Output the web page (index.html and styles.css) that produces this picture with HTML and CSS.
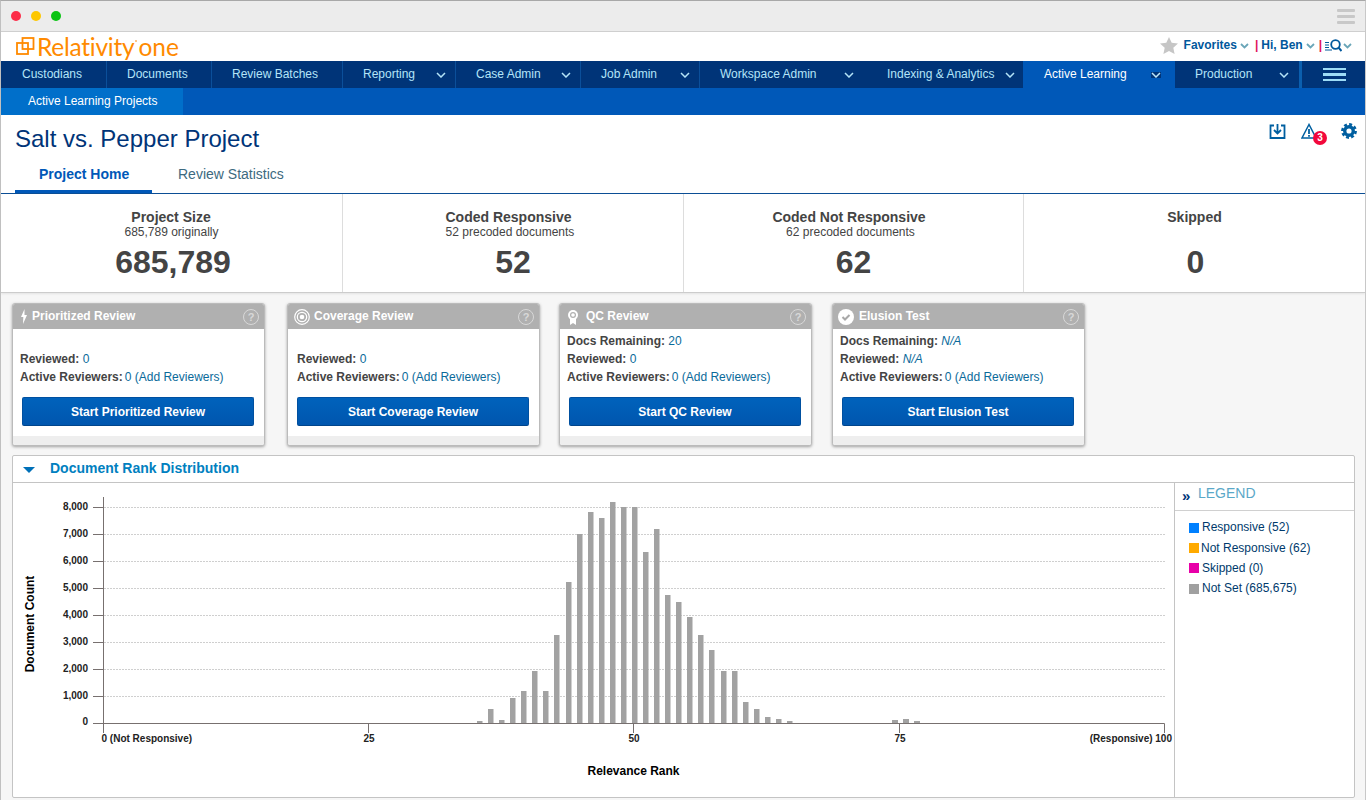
FILE: index.html
```html
<!DOCTYPE html>
<html lang="en">
<head>
  <meta charset="UTF-8">
  <meta name="viewport" content="width=device-width, initial-scale=1.0">
  <title>Salt vs. Pepper Project</title>
  <link rel="stylesheet" href="styles.css">
</head>
<body>
  <div class="window">
    <!-- Browser chrome -->
    <div class="chrome">
      <div class="lights">
        <span class="light light-red"></span>
        <span class="light light-yellow"></span>
        <span class="light light-green"></span>
      </div>
      <div class="chrome-menu"><span></span><span></span><span></span></div>
    </div>

    <!-- Logo row -->
    <div class="brand-row">
      <div class="logo">
        <svg class="logo-mark" width="19" height="18" viewBox="0 0 19 18" fill="none" stroke="#ff8a00" stroke-width="1.800">
          <rect x="1" y="6" width="11" height="11"/>
          <rect x="6.500" y="1" width="11" height="11"/>
        </svg>
        <span class="logo-name">Relativity</span><span class="logo-dot"></span><span class="logo-one">one</span>
      </div>
      <div class="user-menu">
        <svg class="star" width="18" height="17" viewBox="0 0 18 17"><path d="M9 0l2.700 5.800 6.300.7-4.700 4.200 1.300 6.300L9 14l-5.600 3 1.300-6.300L0 6.500l6.300-.7z" fill="#c6c6c6"/></svg>
        <span class="user-link">Favorites</span>
        <svg class="chev-teal" width="9" height="6" viewBox="0 0 9 6"><path d="M1 1l3.500 3.500L8 1" fill="none" stroke="#6aa6b8" stroke-width="1.800"/></svg>
        <span class="pipe">|</span>
        <span class="user-link">Hi, Ben</span>
        <svg class="chev-teal" width="9" height="6" viewBox="0 0 9 6"><path d="M1 1l3.500 3.500L8 1" fill="none" stroke="#6aa6b8" stroke-width="1.800"/></svg>
        <span class="pipe pipe-tight">|</span>
        <svg class="search" width="17" height="13" viewBox="0 0 17 13" fill="none" stroke="#00589c">
          <path d="M0 3.500h4M0 6h4M0 8.500h4M0 11h7" stroke-width="1"/>
          <circle cx="10.500" cy="5.500" r="4.300" stroke-width="1.800"/>
          <path d="M13.500 8.500l3 3.500" stroke-width="2"/>
        </svg>
        <svg class="chev-teal chev-last" width="9" height="6" viewBox="0 0 9 6"><path d="M1 1l3.500 3.500L8 1" fill="none" stroke="#6aa6b8" stroke-width="1.800"/></svg>
      </div>
    </div>

    <!-- Main navigation -->
    <nav class="main-nav">
      <a class="nav-item nav-first">Custodians</a>
      <a class="nav-item">Documents</a>
      <a class="nav-item">Review Batches</a>
      <a class="nav-item">Reporting<svg class="chev" width="10" height="6" viewBox="0 0 10 6"><path d="M1 1l4 4 4-4" fill="none" stroke="currentColor" stroke-width="1.500"/></svg></a>
      <a class="nav-item">Case Admin<svg class="chev" width="10" height="6" viewBox="0 0 10 6"><path d="M1 1l4 4 4-4" fill="none" stroke="currentColor" stroke-width="1.500"/></svg></a>
      <a class="nav-item">Job Admin<svg class="chev" width="10" height="6" viewBox="0 0 10 6"><path d="M1 1l4 4 4-4" fill="none" stroke="currentColor" stroke-width="1.500"/></svg></a>
      <a class="nav-item nav-workspace">Workspace Admin<svg class="chev" width="10" height="6" viewBox="0 0 10 6"><path d="M1 1l4 4 4-4" fill="none" stroke="currentColor" stroke-width="1.500"/></svg></a>
      <a class="nav-item nav-indexing">Indexing &amp; Analytics<svg class="chev" width="10" height="6" viewBox="0 0 10 6"><path d="M1 1l4 4 4-4" fill="none" stroke="currentColor" stroke-width="1.500"/></svg></a>
      <a class="nav-item nav-active">Active Learning<svg class="chev" width="10" height="6" viewBox="0 0 10 6"><path d="M1 1l4 4 4-4" fill="none" stroke="currentColor" stroke-width="1.500"/></svg></a>
      <a class="nav-item nav-last">Production<svg class="chev" width="10" height="6" viewBox="0 0 10 6"><path d="M1 1l4 4 4-4" fill="none" stroke="currentColor" stroke-width="1.500"/></svg></a>
      <div class="nav-burger"><span></span><span></span><span></span></div>
    </nav>

    <div class="sub-nav">
      <a class="sub-item">Active Learning Projects</a>
    </div>

    <!-- Project heading -->
    <header class="page-head">
      <div class="title-row">
        <h1>Salt vs. Pepper Project</h1>
        <div class="head-icons">
          <svg width="17" height="17" viewBox="0 0 17 17" fill="none" stroke="#005fa0" stroke-width="1.800">
            <path d="M5 2.500H1.500v12.500h14V2.500H12"/>
            <path d="M8.500 1v9M5 7l3.500 3.500L12 7"/>
          </svg>
          <div class="alert-icon">
            <svg width="16" height="17" viewBox="0 0 16 17" fill="none" stroke="#005fa0">
              <path d="M8 1.500L1 15h14z" stroke-width="1.500"/>
              <path d="M8 6v5M8 12v1.800" stroke-width="1.800"/>
            </svg>
            <span class="badge">3</span>
          </div>
          <svg class="gear" width="16" height="16" viewBox="0 0 18 18">
            <circle cx="9" cy="9" r="7.400" fill="none" stroke="#005fa0" stroke-width="3" stroke-dasharray="3.300 2.500"/>
            <circle cx="9" cy="9" r="4.800" fill="none" stroke="#005fa0" stroke-width="3.800"/>
          </svg>
        </div>
      </div>
      <div class="tabs">
        <a class="tab tab-active">Project Home</a>
        <a class="tab">Review Statistics</a>
      </div>
    </header>

    <!-- Document counts -->
    <section class="stats">
      <div class="stat stat-first">
        <div class="stat-title">Project Size</div>
        <div class="stat-sub">685,789 originally</div>
        <div class="stat-num">685,789</div>
      </div>
      <div class="stat stat-mid">
        <div class="stat-title">Coded Responsive</div>
        <div class="stat-sub">52 precoded documents</div>
        <div class="stat-num">52</div>
      </div>
      <div class="stat stat-mid">
        <div class="stat-title">Coded Not Responsive</div>
        <div class="stat-sub">62 precoded documents</div>
        <div class="stat-num">62</div>
      </div>
      <div class="stat stat-last">
        <div class="stat-title">Skipped</div>
        <div class="stat-sub">&nbsp;</div>
        <div class="stat-num">0</div>
      </div>
    </section>

    <!-- Review cards -->
    <section class="cards">
      <div class="card">
        <div class="card-head">
          <svg class="card-icon icon-bolt" width="6" height="15" viewBox="0 0 6 15"><path d="M3.500 0L0 8h2.300L2 15l4-9H3.500z" fill="#fff"/></svg>
          <span class="card-title">Prioritized Review</span>
          <span class="help">?</span>
        </div>
        <div class="card-body">
          <div class="line">&nbsp;</div>
          <div class="line"><b>Reviewed:</b> <span class="val">0</span></div>
          <div class="line"><b>Active Reviewers:</b><span class="val count">0</span> <a class="val">(Add Reviewers)</a></div>
          <button class="start">Start Prioritized Review</button>
        </div>
        <div class="card-foot"></div>
      </div>
      <div class="card card-coverage">
        <div class="card-head">
          <svg class="card-icon icon-target" width="16" height="16" viewBox="0 0 16 16" fill="none" stroke="#fff">
            <circle cx="8" cy="8" r="7.300" stroke-width="1.200"/>
            <circle cx="8" cy="8" r="4.700" stroke-width="1.200"/>
            <circle cx="8" cy="8" r="2.300" fill="#fff" stroke="none"/>
          </svg>
          <span class="card-title">Coverage Review</span>
          <span class="help">?</span>
        </div>
        <div class="card-body">
          <div class="line">&nbsp;</div>
          <div class="line"><b>Reviewed:</b> <span class="val">0</span></div>
          <div class="line"><b>Active Reviewers:</b><span class="val count">0</span> <a class="val">(Add Reviewers)</a></div>
          <button class="start">Start Coverage Review</button>
        </div>
        <div class="card-foot"></div>
      </div>
      <div class="card">
        <div class="card-head">
          <svg class="card-icon icon-ribbon" width="12" height="16" viewBox="0 0 12 16">
            <path d="M3 10v6l3-2 3 2v-6z" fill="#fff"/>
            <circle cx="6" cy="6" r="5" fill="#fff"/>
            <circle cx="6" cy="6" r="3" fill="#b0b0b0"/>
            <circle cx="6" cy="6" r="1.800" fill="#fff"/>
          </svg>
          <span class="card-title">QC Review</span>
          <span class="help">?</span>
        </div>
        <div class="card-body">
          <div class="line"><b>Docs Remaining:</b> <span class="val">20</span></div>
          <div class="line"><b>Reviewed:</b> <span class="val">0</span></div>
          <div class="line"><b>Active Reviewers:</b><span class="val count">0</span> <a class="val">(Add Reviewers)</a></div>
          <button class="start">Start QC Review</button>
        </div>
        <div class="card-foot"></div>
      </div>
      <div class="card">
        <div class="card-head">
          <svg class="card-icon icon-check" width="16" height="16" viewBox="0 0 16 16">
            <circle cx="8" cy="8" r="8" fill="#fff"/>
            <path d="M4.500 8l2.500 2.500 4.500-4.500" fill="none" stroke="#a8a8a8" stroke-width="2"/>
          </svg>
          <span class="card-title">Elusion Test</span>
          <span class="help">?</span>
        </div>
        <div class="card-body">
          <div class="line"><b>Docs Remaining:</b> <i class="val">N/A</i></div>
          <div class="line"><b>Reviewed:</b> <i class="val">N/A</i></div>
          <div class="line"><b>Active Reviewers:</b><span class="val count">0</span> <a class="val">(Add Reviewers)</a></div>
          <button class="start">Start Elusion Test</button>
        </div>
        <div class="card-foot"></div>
      </div>
    </section>

    <!-- Rank chart -->
    <section class="panel">
      <div class="panel-head">
        <span class="caret"></span>
        <h2>Document Rank Distribution</h2>
      </div>
      <div class="panel-body">
        <!-- viewBox uses page coordinates so numbers can be read off the screenshot -->
        <svg class="chart" width="1161" height="314" viewBox="13 483 1161 314">
          <g class="grid">
            <path d="M104 507.500H1165M104 534.500H1165M104 561.500H1165M104 588.500H1165M104 615.500H1165M104 642.500H1165M104 669.500H1165M104 696.500H1165"/>
          </g>
          <g class="bars">
            <rect x="477" y="721" width="5.500" height="2.300"/>
            <rect x="488" y="709" width="5.500" height="14.300"/>
            <rect x="499" y="720" width="5.500" height="3.300"/>
            <rect x="510" y="698" width="5.500" height="25.300"/>
            <rect x="521" y="691" width="5.500" height="32.300"/>
            <rect x="532" y="671" width="5.500" height="52.300"/>
            <rect x="543" y="691" width="5.500" height="32.300"/>
            <rect x="554" y="635" width="5.500" height="88.300"/>
            <rect x="566" y="582" width="5.500" height="141.300"/>
            <rect x="577" y="534" width="5.500" height="189.300"/>
            <rect x="588" y="512" width="5.500" height="211.300"/>
            <rect x="599" y="518" width="5.500" height="205.300"/>
            <rect x="610" y="502" width="5.500" height="221.300"/>
            <rect x="621" y="507" width="5.500" height="216.300"/>
            <rect x="632" y="507" width="5.500" height="216.300"/>
            <rect x="643" y="552" width="5.500" height="171.300"/>
            <rect x="654" y="529" width="5.500" height="194.300"/>
            <rect x="665" y="595" width="5.500" height="128.300"/>
            <rect x="676" y="602" width="5.500" height="121.300"/>
            <rect x="687" y="617" width="5.500" height="106.300"/>
            <rect x="698" y="635" width="5.500" height="88.300"/>
            <rect x="709" y="650" width="5.500" height="73.300"/>
            <rect x="721" y="671" width="5.500" height="52.300"/>
            <rect x="732" y="671" width="5.500" height="52.300"/>
            <rect x="743" y="702" width="5.500" height="21.300"/>
            <rect x="754" y="709" width="5.500" height="14.300"/>
            <rect x="765" y="717" width="5.500" height="6.300"/>
            <rect x="776" y="719" width="5.500" height="4.300"/>
            <rect x="787" y="721" width="5.500" height="2.300"/>
            <rect x="892" y="720" width="6" height="3.300"/>
            <rect x="903" y="719" width="6" height="4.300"/>
            <rect x="914" y="721" width="6" height="2.300"/>
          </g>
          <g class="axis">
            <path d="M103.500 497V733M93 723.500H1164.500M368.500 723.500V733M633.500 723.500V733M899.500 723.500V733M1164.500 723.500V733"/>
            <path d="M93 507.500H103M93 534.500H103M93 561.500H103M93 588.500H103M93 615.500H103M93 642.500H103M93 669.500H103M93 696.500H103"/>
          </g>
          <g class="y-labels">
            <text x="88" y="510">8,000</text>
            <text x="88" y="537">7,000</text>
            <text x="88" y="564">6,000</text>
            <text x="88" y="591">5,000</text>
            <text x="88" y="618">4,000</text>
            <text x="88" y="645">3,000</text>
            <text x="88" y="672">2,000</text>
            <text x="88" y="699">1,000</text>
            <text x="88" y="725">0</text>
          </g>
          <g class="x-labels">
            <text x="101.500" y="742">0 (Not Responsive)</text>
            <text x="369" y="742" text-anchor="middle">25</text>
            <text x="634" y="742" text-anchor="middle">50</text>
            <text x="900" y="742" text-anchor="middle">75</text>
            <text x="1172" y="742" text-anchor="end">(Responsive) 100</text>
          </g>
          <text class="axis-title" x="633.500" y="775" text-anchor="middle">Relevance Rank</text>
          <text class="axis-title" text-anchor="middle" transform="translate(34 624) rotate(-90)">Document Count</text>
        </svg>
        <aside class="legend">
          <div class="legend-head"><span class="legend-arrows">»</span><span class="legend-title">LEGEND</span></div>
          <ul class="legend-list">
            <li><span class="swatch swatch-blue"></span>Responsive (52)</li>
            <li><span class="swatch swatch-orange"></span><span class="legend-tight">Not Responsive (62)</span></li>
            <li><span class="swatch swatch-pink"></span>Skipped (0)</li>
            <li><span class="swatch swatch-gray"></span>Not Set (685,675)</li>
          </ul>
        </aside>
      </div>
    </section>
  </div>
</body>
</html>
```

FILE: styles.css
```css
* {
  box-sizing: border-box;
}
html, body {
  margin: 0;
  padding: 0;
}
body {
  font-family: "Liberation Sans", Arial, sans-serif;
  font-size: 12px;
  color: #444;
  background-color: #f6f6f6;
}
.window {
  width: 1366px;
  height: 800px;
  overflow: hidden;
  background-color: #f6f6f6;
  border-top: 1px solid #a8a8a8;
  border-left: 1px solid #c0c0c0;
  border-right: 1px solid #c8c8c8;
}

/* Browser chrome */
.chrome {
  height: 31px;
  display: flex;
  align-items: center;
  justify-content: space-between;
  padding: 0 10px 0 10px;
  background-color: #ececec;
  border-bottom: 1px solid #cfcfcf;
}
.lights {
  display: flex;
  gap: 10px;
}
.light {
  width: 10px;
  height: 10px;
  border-radius: 50%;
}
.light-red { background-color: #fc2c48; }
.light-yellow { background-color: #fdc700; }
.light-green { background-color: #0ac413; }
.chrome-menu {
  width: 18px;
  display: flex;
  flex-direction: column;
  gap: 3px;
}
.chrome-menu span {
  height: 3px;
  background-color: #c8c8c8;
  border-radius: 1px;
}

/* Logo row */
.brand-row {
  height: 29px;
  display: flex;
  align-items: center;
  justify-content: space-between;
  padding: 0 13px 3px 15px;
  background-color: #fff;
}
.logo {
  display: flex;
  align-items: center;
  margin-top: 3px;
  color: #ff8a00;
  font-family: Lato, "Liberation Sans", sans-serif;
  font-weight: 400;
  font-size: 24.500px;
  line-height: 29px;
}
.logo-mark {
  margin-right: 2px;
  margin-top: -1px;
}
.logo-name {
  letter-spacing: -0.25px;
}
.logo-dot {
  width: 2px;
  height: 2px;
  margin: -12px 1px 0 1px;
  border-radius: 50%;
  background-color: #ffb060;
}
.user-menu {
  display: flex;
  align-items: center;
  font-size: 12px;
}
.star {
  margin-right: 6px;
}
.user-link {
  font-weight: bold;
  color: #00589c;
}
.chev-teal {
  margin: 1px 0 0 3px;
}
.chev-last {
  margin-left: 1px;
}
.pipe {
  color: #e0105a;
  margin: 0 3px 0 6px;
  font-weight: bold;
}
.pipe-tight {
  margin-left: 4px;
}

/* Main navigation */
.main-nav {
  height: 27px;
  display: grid;
  grid-template-columns: 106px 105px 131px 113px 125px 119px 159px 164px 152px 127px 1fr;
  background-color: #003478;
}
.nav-item {
  display: flex;
  align-items: center;
  justify-content: space-between;
  padding: 0 9px 2px 20px;
  color: #b4e4f8;
  border-right: 1px solid #0b4f9a;
  white-space: nowrap;
}
.nav-first {
  padding-left: 21px;
}
.nav-workspace {
  padding-right: 5px;
  border-right: none;
}
.nav-indexing {
  padding-left: 28px;
  padding-right: 8px;
  border-right: none;
}
.nav-active {
  padding-left: 21px;
  padding-right: 14px;
  color: #fff;
  background-color: #0058b8;
  border-right: none;
}
.nav-active .chev {
  color: #bfe6f8;
  background-color: #003478;
}
.nav-last {
  padding-right: 10px;
  border-right: 3px solid #0b5fae;
}
.chev {
  flex: none;
  margin-top: 3px;
}
.nav-burger {
  display: flex;
  flex-direction: column;
  justify-content: center;
  gap: 3px;
  padding: 0 19px 0 21px;
}
.nav-burger span {
  height: 2.500px;
  background-color: #9edcf6;
}
.sub-nav {
  height: 27px;
  background-color: #0058b8;
}
.sub-item {
  display: flex;
  align-items: center;
  width: 182px;
  height: 27px;
  padding: 0 0 1px 27px;
  color: #fff;
  background-color: #006fca;
}

/* Project heading */
.page-head {
  height: 79px;
  background-color: #fff;
  border-bottom: 1px solid #0c4f96;
}
.title-row {
  height: 46px;
  display: flex;
  justify-content: space-between;
  padding: 8px 8px 0 14px;
}
h1 {
  margin: 0;
  font-size: 24px;
  font-weight: normal;
  line-height: 32px;
  color: #003478;
}
.head-icons {
  display: flex;
  align-items: flex-start;
  gap: 15px;
}
.alert-icon {
  position: relative;
  width: 16px;
  height: 17px;
  margin-right: 9px;
}
.badge {
  position: absolute;
  left: 12px;
  top: 8px;
  width: 14px;
  height: 14px;
  border-radius: 50%;
  background-color: #f2083c;
  color: #fff;
  font-size: 10px;
  font-weight: bold;
  line-height: 14px;
  text-align: center;
}
.tabs {
  display: flex;
  padding-left: 14px;
  height: 32px;
}
.tab {
  font-size: 14px;
  line-height: 26px;
  color: #3d6a80;
}
.tab + .tab {
  margin-left: 26px;
}
.tab-active {
  width: 137px;
  padding-left: 24px;
  font-weight: bold;
  color: #0058b8;
  border-bottom: 3px solid #0058b8;
}

/* Document counts */
.stats {
  height: 99px;
  display: grid;
  grid-template-columns: 342px 341px 340px 1fr;
  background-color: #fff;
  border-bottom: 1px solid #ccc;
  box-shadow: 0 1px 2px rgba(0, 0, 0, 0.08);
}
.stat {
  padding-top: 15px;
  text-align: center;
  border-right: 1px solid #ddd;
}
.stat:last-child {
  border-right: none;
}
.stat-title {
  font-size: 14px;
  font-weight: bold;
  line-height: 16px;
}
.stat-sub {
  margin-top: 1px;
  font-size: 12px;
  line-height: 13px;
}
.stat-num {
  margin-top: 4px;
  font-size: 32px;
  font-weight: bold;
  line-height: 38px;
}
.stat-first .stat-title {
  padding-right: 1px;
}
.stat-first .stat-num {
  padding-left: 3px;
}
.stat-mid .stat-title {
  padding-right: 9px;
}
.stat-mid .stat-sub {
  padding-right: 6px;
}
.stat-last .stat-num {
  padding-left: 2px;
}

/* Review cards */
.cards {
  display: grid;
  grid-template-columns: 275px 272px 273px 253px;
  padding: 10px 0 0 11px;
  height: 153px;
}
.card {
  width: 253px;
  height: 143px;
  display: flex;
  flex-direction: column;
  border: 1px solid #bbb;
  border-radius: 3px;
  background-color: #fff;
  box-shadow: 0 1px 3px rgba(0, 0, 0, 0.35);
  overflow: hidden;
}
.card-head {
  height: 25px;
  flex: none;
  display: flex;
  align-items: center;
  padding: 0 5px 0 7px;
  background-color: #b0b0b0;
  color: #fff;
}
.card-icon {
  flex: none;
}
.icon-bolt { margin: 0 5px 0 1px; }
.icon-target { margin: 0 4px 0 -1px; }
.icon-ribbon { margin: 0 7px 0 0; }
.icon-check { margin: 0 5px 0 -2px; }
.card-title {
  flex: 1;
  font-weight: bold;
  margin-top: -2px;
}
.help {
  width: 16px;
  height: 16px;
  border: 1px solid #d8d8d8;
  border-radius: 50%;
  color: #d8d8d8;
  font-size: 11px;
  font-weight: bold;
  line-height: 14px;
  text-align: center;
}
.card-body {
  flex: 1;
  padding: 3px 10px 0 7px;
}
.card-coverage .card-body {
  padding-left: 9px;
}
.line {
  height: 18px;
  line-height: 18px;
  white-space: nowrap;
}
.line b {
  color: #444;
}
.val {
  color: #0a6a9a;
}
.count {
  margin-left: 2px;
}
.start {
  display: block;
  width: 232px;
  height: 29px;
  margin: 11px 0 0 2px;
  padding: 0;
  border: 1px solid #0050a0;
  border-bottom-color: #00458c;
  border-radius: 2px;
  background: linear-gradient(#0062bc, #0056ae);
  color: #fff;
  font-family: inherit;
  font-size: 12px;
  font-weight: bold;
}
.card-coverage .start {
  margin-left: 0;
}
.card-foot {
  height: 9px;
  flex: none;
  background-color: #eee;
}

/* Rank chart */
.panel {
  width: 1343px;
  height: 343px;
  margin: 9px 0 0 11px;
  background-color: #fff;
  border: 1px solid #c4c4c4;
  border-radius: 2px;
}
.panel-head {
  height: 27px;
  display: flex;
  align-items: center;
  padding: 0 0 2px 10px;
  border-bottom: 1px solid #c4c4c4;
}
.caret {
  width: 0;
  height: 0;
  margin-top: 3px;
  border-left: 6px solid transparent;
  border-right: 6px solid transparent;
  border-top: 6px solid #0070b8;
}
.panel-head h2 {
  margin: 0 0 0 15px;
  font-size: 14px;
  color: #0080c0;
}
.panel-body {
  display: flex;
  height: 314px;
}
.chart {
  display: block;
  flex: none;
}
.chart text {
  font-family: "Liberation Sans", Arial, sans-serif;
}
.grid path {
  fill: none;
  stroke: #cfcfcf;
  stroke-dasharray: 2 1;
}
.bars rect {
  fill: #a2a2a2;
}
.axis path {
  fill: none;
  stroke: #77706f;
}
.y-labels text {
  font-size: 10px;
  font-weight: bold;
  fill: #222;
  text-anchor: end;
}
.x-labels text {
  font-size: 10px;
  font-weight: bold;
  fill: #222;
}
.axis-title {
  font-size: 12px;
  font-weight: bold;
  fill: #000;
}
.legend {
  flex: 1;
  border-left: 1px solid #c4c4c4;
}
.legend-head {
  height: 28px;
  display: flex;
  align-items: center;
  padding-left: 7px;
  border-bottom: 1px solid #d0d0d0;
}
.legend-arrows {
  width: 16px;
  margin-bottom: 2px;
  color: #003478;
  font-size: 15px;
  font-weight: bold;
  line-height: 20px;
}
.legend-title {
  margin-bottom: 7px;
  font-size: 14px;
  color: #5aa8c8;
}
.legend-list {
  list-style: none;
  margin: 6px 0 0 0;
  padding: 0 0 0 14px;
}
.legend-list li {
  display: flex;
  align-items: center;
  height: 20.400px;
  color: #003a6c;
  white-space: nowrap;
}
.swatch {
  flex: none;
  width: 10px;
  height: 10px;
  margin: 1px 3px 0 0;
}
.legend-tight {
  margin-left: -1px;
}
.swatch-blue { background-color: #0080ff; }
.swatch-orange { background-color: #ffaa00; }
.swatch-pink { background-color: #e800a8; }
.swatch-gray { background-color: #a0a0a0; }
```
